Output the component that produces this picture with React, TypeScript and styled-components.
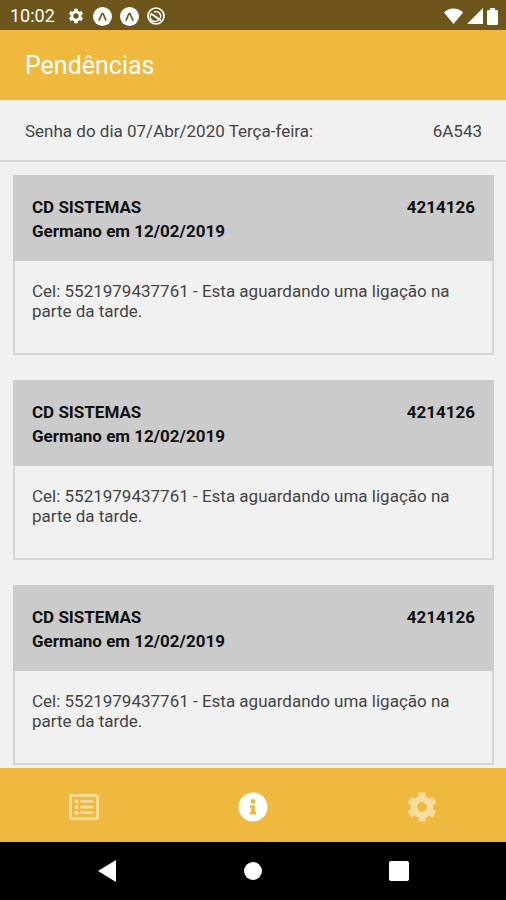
import React from "react";
import styled, { createGlobalStyle } from "styled-components";
import { FaCog, FaInfoCircle, FaRegListAlt } from "react-icons/fa";
import { MdSettings } from "react-icons/md";

const GlobalStyle = createGlobalStyle`
  *, *::before, *::after { box-sizing: border-box; }
  body {
    margin: 0;
    background: #f1f1f1;
    color: #444;
    font-family: Roboto, "Liberation Sans", sans-serif;
    font-size: 17px;
    line-height: 20px;
  }
  h1, h2, p { margin: 0; }
`;

const Screen = styled.div`
  display: flex;
  flex-direction: column;
  height: 100vh;
`;

const StatusBar = styled.div`
  display: flex;
  flex: none;
  align-items: center;
  justify-content: space-between;
  height: 30px;
  padding: 2px 8px 0 10px;
  background: #6e551c;
  color: #fff;
`;

const StatusGroup = styled.div<{ $gap: number }>`
  display: flex;
  align-items: center;
  gap: ${({ $gap }) => $gap}px;

  svg { display: block; }
`;

const Clock = styled.time`
  width: 49px;
  font-size: 18px;
`;

const Header = styled.header`
  display: flex;
  flex: none;
  align-items: center;
  height: 70px;
  padding: 2px 25px 0;
  background: #efb83f;
  color: #fff;
`;

const Title = styled.h1`
  font-size: 25px;
  font-weight: 400;
  line-height: 32px;
`;

const PasswordRow = styled.div`
  display: flex;
  flex: none;
  align-items: center;
  justify-content: space-between;
  height: 62px;
  padding: 2px 24px 0 25px;
  border-bottom: 2px solid #d6d6d6;
`;

const List = styled.main`
  display: flex;
  flex: 1;
  flex-direction: column;
  gap: 25px;
  min-height: 0;
  padding: 13px 12px 3px 13px;
  overflow: hidden auto;
  scrollbar-width: none;
`;

const Card = styled.article`
  flex: none;
  border: 2px solid #d6d6d6;
  border-top: 0;
`;

const CardHead = styled.div`
  display: flex;
  justify-content: space-between;
  margin: 0 -2px;
  padding: 20px 19px 18px;
  background: #cbcbcb;
  color: #111;
  line-height: 24px;
`;

const CardTitle = styled.h2`
  font-size: 17px;
  font-weight: 700;
`;

const CardStrong = styled.p`
  font-weight: 700;
`;

const CardBody = styled.p`
  min-height: 92px;
  padding: 20px 17px;
`;

const TabBar = styled.nav`
  display: grid;
  flex: none;
  grid-template-columns: repeat(3, 1fr);
  height: 74px;
  background: #efb83f;
`;

const Tab = styled.button<{ $active?: boolean }>`
  display: flex;
  align-items: center;
  justify-content: center;
  padding: 4px 0 0;
  border: 0;
  background: none;
  color: ${({ $active }) => ($active ? "#fff" : "#f8dc9f")};
  cursor: pointer;
`;

const SystemBar = styled.div`
  display: flex;
  flex: none;
  justify-content: center;
  gap: 118px;
  height: 58px;
  background: #000;
`;

const SystemButton = styled.button`
  display: flex;
  align-items: center;
  justify-content: center;
  width: 28px;
  padding: 0;
  border: 0;
  background: none;
  color: #fff;
  cursor: pointer;
`;

const ExpoIcon = () => (
  <svg width="19" height="19" viewBox="0 0 19 19" aria-hidden="true">
    <circle cx="9.5" cy="9.5" r="9.5" fill="#fff" />
    <path d="M6.2 13 9 6.5h1L12.8 13" fill="none" stroke="#6e551c" strokeWidth="1.7" strokeLinecap="round" strokeLinejoin="round" />
  </svg>
);

const SyncOffIcon = () => (
  <svg width="18" height="18" viewBox="0 0 18 18" fill="none" stroke="#fff" aria-hidden="true">
    <circle cx="9" cy="9" r="8" strokeWidth="1.7" />
    <path d="M5.2 6.2a4.6 4.6 0 1 0 6.4 6.4M7 5a4.6 4.6 0 0 1 6.2 6" strokeWidth="1.5" />
    <path d="M5 7.2 13.8 13.4" strokeWidth="2" />
  </svg>
);

const WifiIcon = () => (
  <svg width="19" height="16" viewBox="0 0 19 16" fill="#fff" aria-hidden="true">
    <path d="M0 4.5C5-1 14-1 19 4.5L9.5 16Z" />
  </svg>
);

const SignalIcon = () => (
  <svg width="16" height="16" viewBox="0 0 16 16" fill="#fff" aria-hidden="true">
    <path d="M16 0v16H0Z" />
  </svg>
);

const BatteryIcon = () => (
  <svg width="11" height="17" viewBox="0 0 11 17" fill="#fff" aria-hidden="true">
    <path d="M3 0h5v2h2q1 0 1 1v13q0 1-1 1H1q-1 0-1-1V3q0-1 1-1h2Z" />
  </svg>
);

const pending = [1, 2, 3].map((id) => ({
  id,
  company: "CD SISTEMAS",
  code: "4214126",
  opened: "Germano em 12/02/2019",
  note: "Cel: 5521979437761 - Esta aguardando uma ligação na parte da tarde.",
}));

export default function App() {
  return (
    <Screen>
      <GlobalStyle />
      <StatusBar>
        <StatusGroup $gap={8}>
          <Clock>10:02</Clock>
          <MdSettings size={18} />
          <ExpoIcon />
          <ExpoIcon />
          <SyncOffIcon />
        </StatusGroup>
        <StatusGroup $gap={4}>
          <WifiIcon />
          <SignalIcon />
          <BatteryIcon />
        </StatusGroup>
      </StatusBar>
      <Header>
        <Title>Pendências</Title>
      </Header>
      <PasswordRow>
        <span>Senha do dia 07/Abr/2020 Terça-feira:</span>
        <span>6A543</span>
      </PasswordRow>
      <List>
        {pending.map((item) => (
          <Card key={item.id}>
            <CardHead>
              <div>
                <CardTitle>{item.company}</CardTitle>
                <CardStrong>{item.opened}</CardStrong>
              </div>
              <CardStrong>{item.code}</CardStrong>
            </CardHead>
            <CardBody>{item.note}</CardBody>
          </Card>
        ))}
      </List>
      <TabBar>
        <Tab type="button" aria-label="Lista">
          <FaRegListAlt size={30} />
        </Tab>
        <Tab type="button" aria-label="Pendências" aria-current="page" $active>
          <FaInfoCircle size={30} />
        </Tab>
        <Tab type="button" aria-label="Configurações">
          <FaCog size={30} />
        </Tab>
      </TabBar>
      <SystemBar>
        <SystemButton type="button" aria-label="Voltar">
          <svg width="18" height="22" viewBox="0 0 18 22" fill="currentColor">
            <path d="M18 0v22L0 11Z" />
          </svg>
        </SystemButton>
        <SystemButton type="button" aria-label="Início">
          <svg width="18" height="18" viewBox="0 0 18 18" fill="currentColor">
            <circle cx="9" cy="9" r="9" />
          </svg>
        </SystemButton>
        <SystemButton type="button" aria-label="Recentes">
          <svg width="20" height="20" viewBox="0 0 20 20" fill="currentColor">
            <rect width="20" height="20" rx="2" />
          </svg>
        </SystemButton>
      </SystemBar>
    </Screen>
  );
}
